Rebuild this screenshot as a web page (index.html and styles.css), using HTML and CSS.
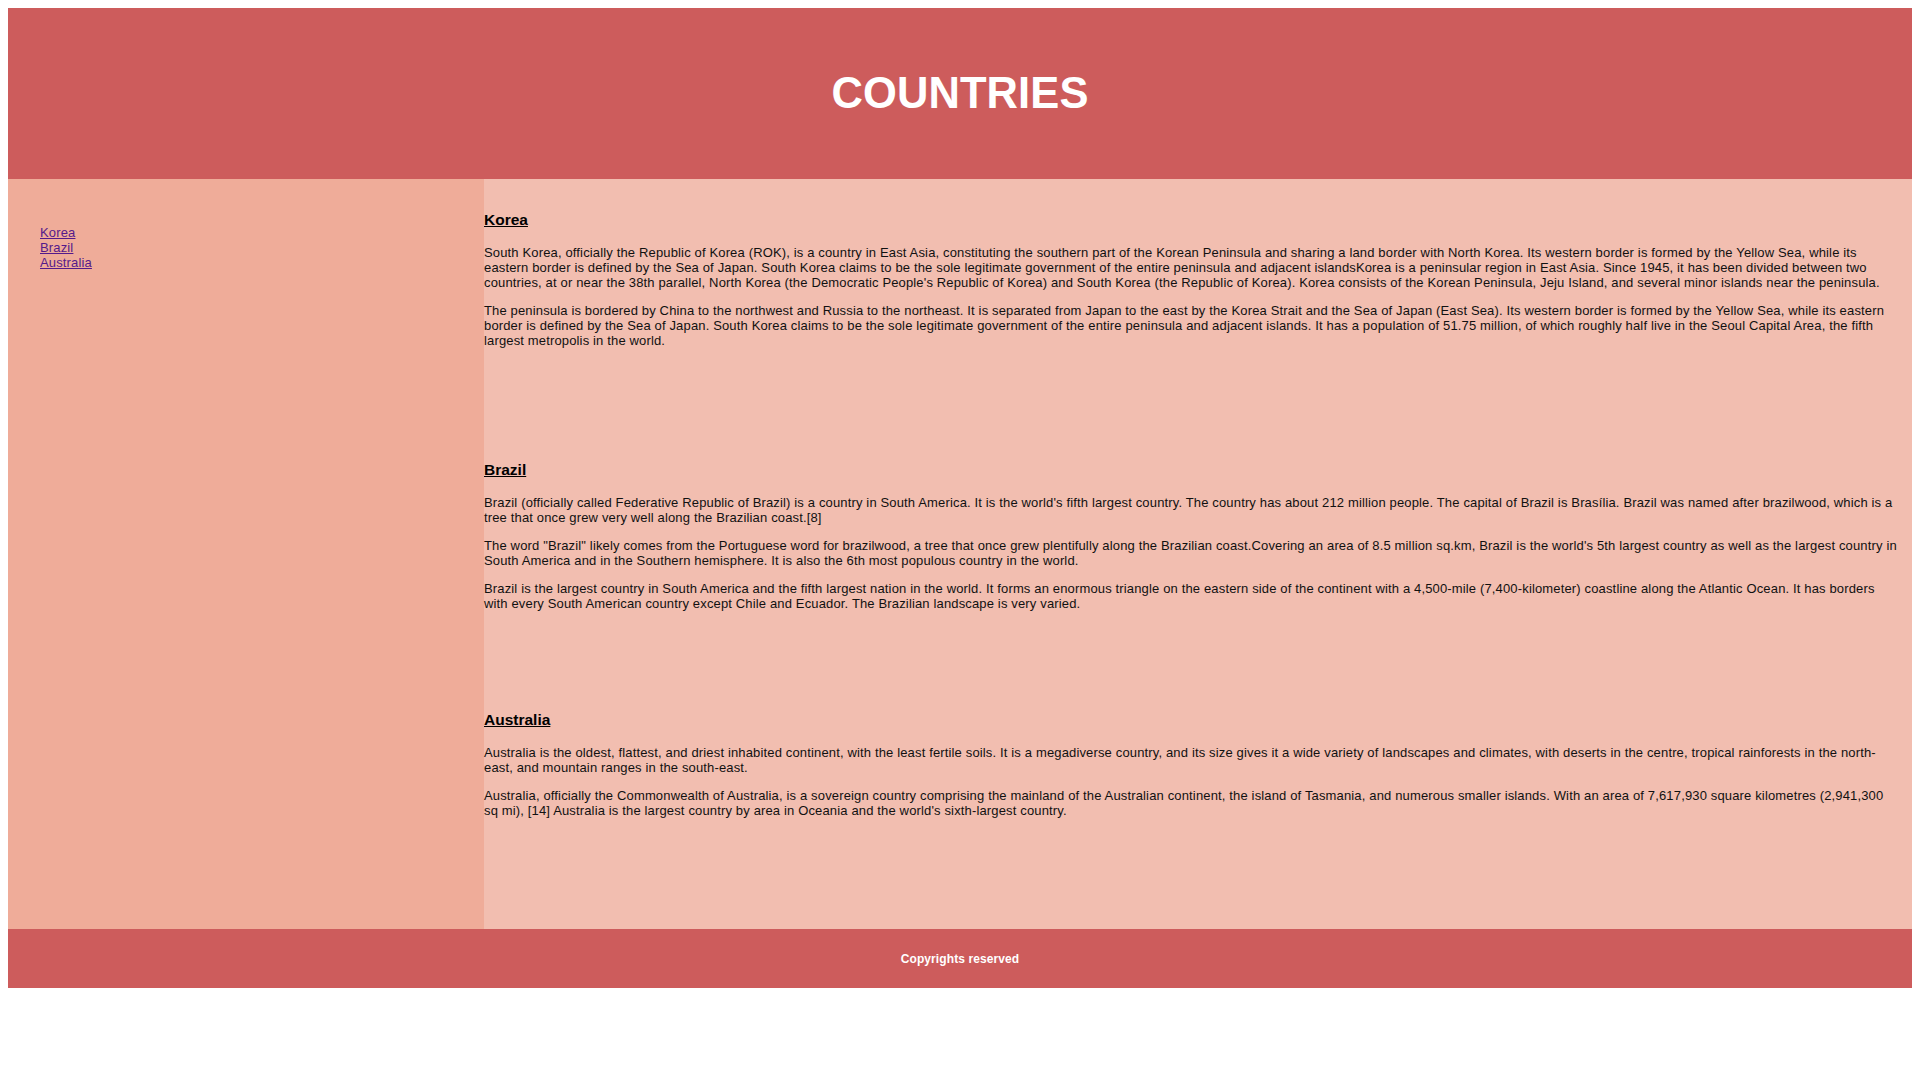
FILE: index.html
```html
<!DOCTYPE html>
<html lang="en">
<head>
<meta charset="utf-8">
<title>Countries</title>
<link rel="stylesheet" href="styles.css">
</head>
<body>
<header class="site-header">
  <h1 class="site-title">COUNTRIES</h1>
</header>
<div class="layout">
  <nav class="sidebar">
    <ul class="nav-list">
      <li><a class="nav-link" href="#korea">Korea</a></li>
      <li><a class="nav-link" href="#brazil">Brazil</a></li>
      <li><a class="nav-link" href="#australia">Australia</a></li>
    </ul>
  </nav>
  <main class="content">
    <section class="country" id="korea">
      <h2 class="country-title">Korea</h2>
      <p class="country-text">South Korea, officially the Republic of Korea (ROK), is a country in East Asia, constituting the southern part of the Korean Peninsula and sharing a land border with North Korea. Its western border is formed by the Yellow Sea, while its eastern border is defined by the Sea of Japan. South Korea claims to be the sole legitimate government of the entire peninsula and adjacent islandsKorea is a peninsular region in East Asia. Since 1945, it has been divided between two countries, at or near the 38th parallel, North Korea (the Democratic People's Republic of Korea) and South Korea (the Republic of Korea). Korea consists of the Korean Peninsula, Jeju Island, and several minor islands near the peninsula.</p>
      <p class="country-text">The peninsula is bordered by China to the northwest and Russia to the northeast. It is separated from Japan to the east by the Korea Strait and the Sea of Japan (East Sea). Its western border is formed by the Yellow Sea, while its eastern border is defined by the Sea of Japan. South Korea claims to be the sole legitimate government of the entire peninsula and adjacent islands. It has a population of 51.75 million, of which roughly half live in the Seoul Capital Area, the fifth largest metropolis in the world.</p>
    </section>
    <section class="country" id="brazil">
      <h2 class="country-title">Brazil</h2>
      <p class="country-text">Brazil (officially called Federative Republic of Brazil) is a country in South America. It is the world's fifth largest country. The country has about 212 million people. The capital of Brazil is Brasília. Brazil was named after brazilwood, which is a tree that once grew very well along the Brazilian coast.[8]</p>
      <p class="country-text">The word "Brazil" likely comes from the Portuguese word for brazilwood, a tree that once grew plentifully along the Brazilian coast.Covering an area of 8.5 million sq.km, Brazil is the world's 5th largest country as well as the largest country in South America and in the Southern hemisphere. It is also the 6th most populous country in the world.</p>
      <p class="country-text">Brazil is the largest country in South America and the fifth largest nation in the world. It forms an enormous triangle on the eastern side of the continent with a 4,500-mile (7,400-kilometer) coastline along the Atlantic Ocean. It has borders with every South American country except Chile and Ecuador. The Brazilian landscape is very varied.</p>
    </section>
    <section class="country" id="australia">
      <h2 class="country-title">Australia</h2>
      <p class="country-text">Australia is the oldest, flattest, and driest inhabited continent, with the least fertile soils. It is a megadiverse country, and its size gives it a wide variety of landscapes and climates, with deserts in the centre, tropical rainforests in the north-east, and mountain ranges in the south-east.</p>
      <p class="country-text">Australia, officially the Commonwealth of Australia, is a sovereign country comprising the mainland of the Australian continent, the island of Tasmania, and numerous smaller islands. With an area of 7,617,930 square kilometres (2,941,300 sq mi), [14] Australia is the largest country by area in Oceania and the world's sixth-largest country.</p>
    </section>
  </main>
</div>
<footer class="site-footer">
  <p class="footer-text">Copyrights reserved</p>
</footer>
</body>
</html>
```

FILE: styles.css
```css
html, body {
  background: #ffffff;
}

body {
  margin: 8px;
  font-family: "Liberation Sans", Arial, sans-serif;
  font-size: 13px;
  color: #111111;
}

.site-header {
  height: 171px;
  background: #cd5c5c;
  display: flex;
  align-items: center;
  justify-content: center;
}

.site-title {
  margin: 0;
  font-size: 43.5px;
  font-weight: bold;
  color: #ffffff;
  letter-spacing: 0.1px;
}

.layout {
  display: grid;
  grid-template-columns: 25% 75%;
}

.sidebar {
  background: #efac99;
  padding: 46px 0 0 32px;
}

.nav-list {
  list-style: none;
  margin: 0;
  padding: 0;
}

.nav-link {
  color: #551a8b;
  text-decoration: underline;
  letter-spacing: 0.15px;
}

.content {
  background: #f2beb0;
  padding-right: 14px;
}

.country {
  height: 250px;
  box-sizing: border-box;
  padding-top: 32px;
}

.country-title {
  margin: 0 0 15.5px;
  font-size: 15.5px;
  font-weight: bold;
  text-decoration: underline;
  color: #000000;
}

.country-text {
  margin: 0 0 13px;
  line-height: normal;
  letter-spacing: 0.15px;
}

.site-footer {
  height: 59px;
  background: #cd5c5c;
  display: flex;
  align-items: center;
  justify-content: center;
}

.footer-text {
  margin: 0;
  font-size: 12px;
  font-weight: bold;
  color: #ffffff;
  letter-spacing: 0.1px;
}
```
